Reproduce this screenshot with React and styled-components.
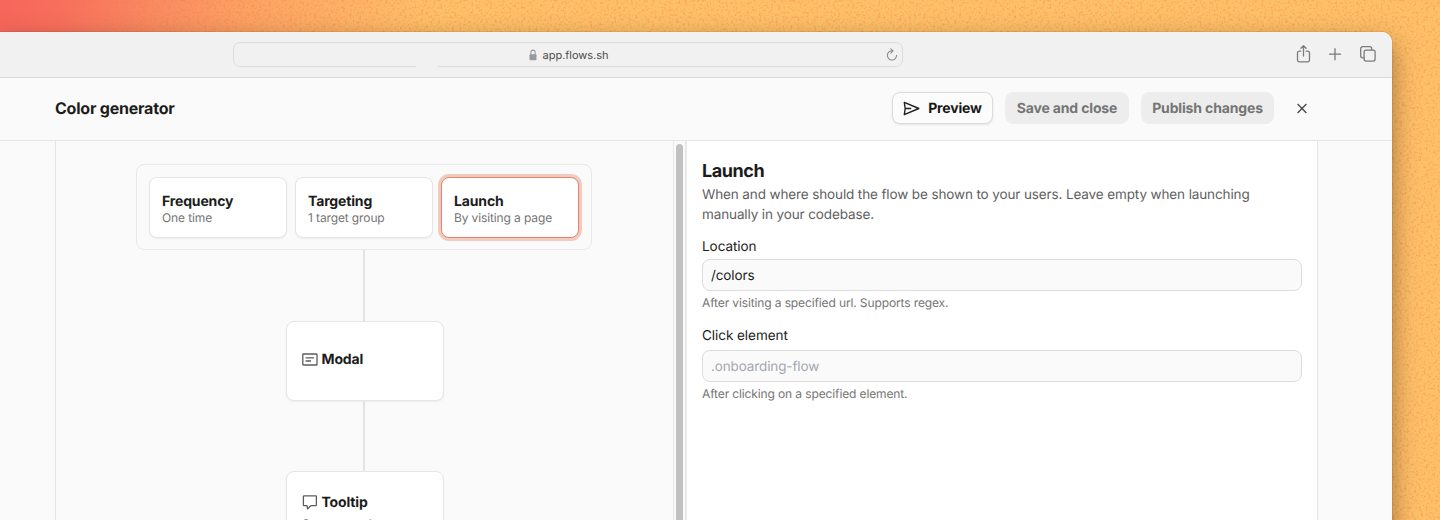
import React from "react";
import styled, { createGlobalStyle, css } from "styled-components";

const GlobalStyle = createGlobalStyle`
  * { box-sizing: border-box; }
  body { margin: 0; overflow: hidden; text-rendering: geometricPrecision; }
  h1, h2, h3, p { margin: 0; font-weight: inherit; }
  button, input { font: inherit; margin: 0; text-rendering: inherit; }
`;

const Desktop = styled.div`
  position: relative;
  width: 1440px;
  height: 520px;
  padding-top: 32px;
  overflow: hidden;
  font-family: Inter, "Liberation Sans", sans-serif;
  color: #1c1c1c;
  background: linear-gradient(97deg, #f7655d 0, #f76f5e 60px, #f98d62 160px, #fca364 250px, #fdb467 350px, #fec16a 440px, #fec16a 100%);
`;

const Grain = styled.svg`
  position: absolute;
  inset: 0;
  width: 100%;
  height: 100%;
`;

const Window = styled.main`
  position: relative;
  display: flex;
  flex-direction: column;
  width: 1392px;
  height: 600px;
  overflow: hidden;
  border-top-right-radius: 10px;
  background: #fafafa;
`;

const WindowShadow = styled.div`
  position: relative;
  width: 1392px;
  border-top-right-radius: 10px;
  box-shadow: 0 0 1px rgba(60, 30, 0, 0.7), 0 10px 26px rgba(60, 40, 10, 0.5);
`;

const BrowserBar = styled.div`
  display: flex;
  align-items: center;
  flex: none;
  height: 46px;
  padding: 0 15px 0 233px;
  background: #f1f1f1;
  border-bottom: 1px solid #dadada;
`;

const AddressBar = styled.div`
  display: grid;
  grid-template-columns: 1fr auto 1fr;
  align-items: center;
  width: 670px;
  height: 25px;
  border: 1px solid #dddddd;
  border-radius: 7px;
  padding: 0 4px 0 5px;
  position: relative;
`;

const BorderGap = styled.span`
  position: absolute;
  left: 182px;
  bottom: -1px;
  width: 22px;
  height: 1px;
  background: #f1f1f1;
`;

const Address = styled.div`
  grid-column: 2;
  display: flex;
  align-items: center;
  gap: 6px;
  font-size: 11px;
  line-height: 14px;
  letter-spacing: -0.04px;
  color: #4b4b4b;
`;

const Reload = styled.div`
  display: flex;
  justify-content: flex-end;
`;

const BrowserActions = styled.div`
  display: flex;
  align-items: center;
  gap: 14px;
  height: 18px;
  margin: 0 0 2px auto;
`;

const Header = styled.header`
  display: flex;
  align-items: center;
  flex: none;
  height: 63px;
  padding: 0 84px 2px 55px;
  border-bottom: 1px solid #e5e5e5;
`;

const PageTitle = styled.h1`
  font-size: 16px;
  line-height: 24px;
  font-weight: 700;
  letter-spacing: -0.22px;
`;

const HeaderActions = styled.div`
  display: flex;
  align-items: center;
  gap: 12px;
  margin-left: auto;
`;

const Button = styled.button`
  display: flex;
  align-items: center;
  justify-content: center;
  gap: 8px;
  width: ${(p) => p.$width}px;
  height: 32px;
  padding: 2px 0 0;
  border: 1px solid #ededed;
  border-radius: 8px;
  background: #ededed;
  color: #757575;
  font-size: 14px;
  line-height: 20px;
  font-weight: 700;
  letter-spacing: -0.15px;
  white-space: nowrap;
  ${(p) =>
    p.$primary &&
    css`
      border-color: #dcdcdc;
      background: #fcfcfc;
      color: #171717;
      box-shadow: 0 1px 2px rgba(0, 0, 0, 0.09);
    `}
`;

const CloseButton = styled.button`
  display: flex;
  width: 12px;
  height: 12px;
  margin-left: 10px;
  padding: 0;
  border: 0;
  background: none;
`;

const Workspace = styled.div`
  display: flex;
  flex: 1;
  width: 1263px;
  margin-left: 55px;
  border: solid #e5e5e5;
  border-width: 0 1px;
`;

const FlowPane = styled.section`
  display: flex;
  flex-direction: column;
  align-items: center;
  width: 617px;
  padding: 23px 1px 0 0;
`;

const ScrollTrack = styled.div`
  width: 14px;
  padding: 3px 2px 0;
  background: #fafafa;
  border: solid #e8e8e8;
  border-width: 0 2px 0 1px;
`;

const ScrollThumb = styled.div`
  width: 7px;
  height: 500px;
  border-radius: 4px;
  background: #c1c1c1;
`;

const StepGroup = styled.div`
  display: flex;
  gap: 8px;
  width: 456px;
  height: 86px;
  padding: 12px;
  border: 1px solid #e8e8e8;
  border-radius: 8px;
`;

const StepCard = styled.div`
  flex: none;
  width: 138px;
  height: 61px;
  padding: 14px 12px 0;
  border: 1px solid #e5e5e5;
  border-radius: 8px;
  background: #fff;
  box-shadow: 0 1px 2px rgba(0, 0, 0, 0.06);
  ${(p) =>
    p.$selected &&
    css`
      border-color: #e68266;
      box-shadow: 0 0 0 3px #efcbc1;
    `}
`;

const CardTitle = styled.h3`
  font-size: 14px;
  line-height: 20px;
  font-weight: 700;
  letter-spacing: -0.15px;
`;

const CardText = styled.p`
  font-size: 12px;
  line-height: 12px;
  letter-spacing: -0.12px;
  color: #757575;
`;

const Connector = styled.div`
  flex: none;
  width: 2px;
  height: ${(p) => p.$height}px;
  background: #e3e3e3;
`;

const NodeCard = styled.div`
  flex: none;
  width: 158px;
  height: 80px;
  margin-left: 1px;
  padding: ${(p) => p.$top}px 15px 0;
  border: 1px solid #e6e6e6;
  border-radius: 8px;
  background: #fff;
  box-shadow: 0 1px 2px rgba(0, 0, 0, 0.06);
`;

const NodeHeading = styled.div`
  display: flex;
  align-items: center;
  gap: 4px;
  margin-bottom: 5px;
`;

const Panel = styled.section`
  flex: 1;
  padding: 18px 15px 0;
  background: #fff;
`;

const PanelTitle = styled.h2`
  font-size: 18px;
  line-height: 26px;
  font-weight: 700;
  letter-spacing: -0.45px;
`;

const PanelText = styled.p`
  width: 570px;
  margin-bottom: 12px;
  font-size: 13.5px;
  line-height: 20px;
  letter-spacing: -0.12px;
  color: #5f5f5f;
`;

const Field = styled.label`
  display: block;
  margin-bottom: 15px;
`;

const FieldLabel = styled.span`
  display: block;
  margin-bottom: ${(p) => p.$gap}px;
  font-size: 13.5px;
  line-height: 20px;
  letter-spacing: -0.05px;
`;

const Input = styled.input`
  display: block;
  width: 100%;
  height: 32px;
  padding: 2px 8px 0;
  border: 1px solid #dcdcdc;
  border-radius: 8px;
  outline: 0;
  background: #fafafa;
  color: #1c1c1c;
  font-size: 13.5px;
  letter-spacing: -0.12px;
  &::placeholder { color: #a4a8b3; opacity: 1; }
`;

const Hint = styled.span`
  display: block;
  margin-top: 4px;
  font-size: 12px;
  line-height: 16px;
  letter-spacing: -0.12px;
  color: #757575;
`;

const Icon = ({ w, h, children, ...rest }) => (
  <svg width={w} height={h} viewBox={`0 0 ${w} ${h}`} fill="none" stroke="#7b7b7b" strokeWidth="1.3" strokeLinecap="round" strokeLinejoin="round" {...rest}>
    {children}
  </svg>
);

const steps = [
  { title: "Frequency", text: "One time" },
  { title: "Targeting", text: "1 target group" },
  { title: "Launch", text: "By visiting a page", selected: true },
];

export default function App() {
  return (
    <Desktop>
      <GlobalStyle />
      <Grain>
        <filter id="grain" x="0" y="0" width="100%" height="100%" colorInterpolationFilters="sRGB">
          <feTurbulence type="fractalNoise" baseFrequency="0.42" numOctaves="3" seed="4" />
          <feColorMatrix values="0 0 0 0 0.96  0 0 0 0 0.45  0 0 0 0 0.24  3 0 0 0 -1.45" />
        </filter>
        <rect width="1440" height="520" filter="url(#grain)" opacity="0.36" />
      </Grain>
      <WindowShadow>
        <Window>
          <BrowserBar>
            <AddressBar>
              <BorderGap />
              <Address>
                <Icon w={8} h={12} stroke="#9a9a9a" strokeWidth="1.1">
                  <path d="M1.9 5.5V3.2a2.1 2.1 0 0 1 4.2 0v2.3" />
                  <rect x="0.5" y="5.2" width="7" height="6" rx="1" fill="#9a9a9a" stroke="none" />
                </Icon>
                app.flows.sh
              </Address>
              <Reload>
                <Icon w={12} h={13} stroke="#8c8c8c" strokeWidth="1.1">
                  <path d="M6.4 2.8A4.6 4.6 0 1 0 10.6 7.3M4.8 .8l2.3 2-2.3 2.3" />
                </Icon>
              </Reload>
            </AddressBar>
            <BrowserActions>
              <Icon w={16} h={20}>
                <path d="M5.8 7.2H4.3a1.8 1.8 0 0 0-1.8 1.8v7a1.8 1.8 0 0 0 1.8 1.8h8.4a1.8 1.8 0 0 0 1.8-1.8V9a1.8 1.8 0 0 0-1.8-1.8h-1.5M8.5 12V2M5.9 4.3 8.5 1.7l2.6 2.6" />
              </Icon>
              <Icon w={20} h={20}>
                <path d="M10 4.7v11M4.5 10.2h11" />
              </Icon>
              <Icon w={18} h={18}>
                <rect x="5.1" y="5.1" width="11" height="11" rx="2" />
                <path d="M5 12.8H3.7a2 2 0 0 1-2-2V3.7a2 2 0 0 1 2-2h7a2 2 0 0 1 2 2V5" />
              </Icon>
            </BrowserActions>
          </BrowserBar>
          <Header>
            <PageTitle>Color generator</PageTitle>
            <HeaderActions>
              <Button $primary $width={101}>
                <Icon w={17} h={16} stroke="#202020" strokeWidth="1.4" strokeLinecap="butt">
                  <path d="M1.3 1.4 15.8 7.5 1.3 13.7 2.2 7.5ZM2.2 7.5h6" />
                </Icon>
                Preview
              </Button>
              <Button $width={124}>Save and close</Button>
              <Button $width={133}>Publish changes</Button>
              <CloseButton aria-label="Close">
                <Icon w={12} h={12} stroke="#4a4a4a" strokeWidth="1.4" strokeLinecap="butt">
                  <path d="m1.6 2.1 8.8 8.8m0-8.8-8.8 8.8" />
                </Icon>
              </CloseButton>
            </HeaderActions>
          </Header>
          <Workspace>
            <FlowPane>
              <StepGroup>
                {steps.map((s) => (
                  <StepCard key={s.title} $selected={s.selected}>
                    <CardTitle>{s.title}</CardTitle>
                    <CardText>{s.text}</CardText>
                  </StepCard>
                ))}
              </StepGroup>
              <Connector $height={71} />
              <NodeCard $top={28}>
                <NodeHeading>
                  <Icon w={16} h={16} stroke="#5c5c5c" strokeLinecap="butt">
                    <rect x="0.8" y="2" width="14.2" height="11" rx="0.6" />
                    <path d="M3.6 5.8h8.4M3.6 9h5.4" />
                  </Icon>
                  <CardTitle>Modal</CardTitle>
                </NodeHeading>
              </NodeCard>
              <Connector $height={70} />
              <NodeCard $top={21}>
                <NodeHeading>
                  <Icon w={16} h={16} stroke="#5c5c5c">
                    <path d="M2 .9h11.8a.6.6 0 0 1 .6.6v8.6a.6.6 0 0 1-.6.6H8.8L5.6 13.8 5 10.7H2a.6.6 0 0 1-.6-.6V1.5A.6.6 0 0 1 2 .9Z" />
                  </Icon>
                  <CardTitle>Tooltip</CardTitle>
                </NodeHeading>
                <CardText>Current mode</CardText>
              </NodeCard>
            </FlowPane>
            <ScrollTrack>
              <ScrollThumb />
            </ScrollTrack>
            <Panel>
              <PanelTitle>Launch</PanelTitle>
              <PanelText>
                When and where should the flow be shown to your users. Leave empty when launching manually in your codebase.
              </PanelText>
              <Field>
                <FieldLabel $gap={2}>Location</FieldLabel>
                <Input defaultValue="/colors" />
                <Hint>After visiting a specified url. Supports regex.</Hint>
              </Field>
              <Field>
                <FieldLabel $gap={4}>Click element</FieldLabel>
                <Input placeholder=".onboarding-flow" />
                <Hint>After clicking on a specified element.</Hint>
              </Field>
            </Panel>
          </Workspace>
        </Window>
      </WindowShadow>
    </Desktop>
  );
}
